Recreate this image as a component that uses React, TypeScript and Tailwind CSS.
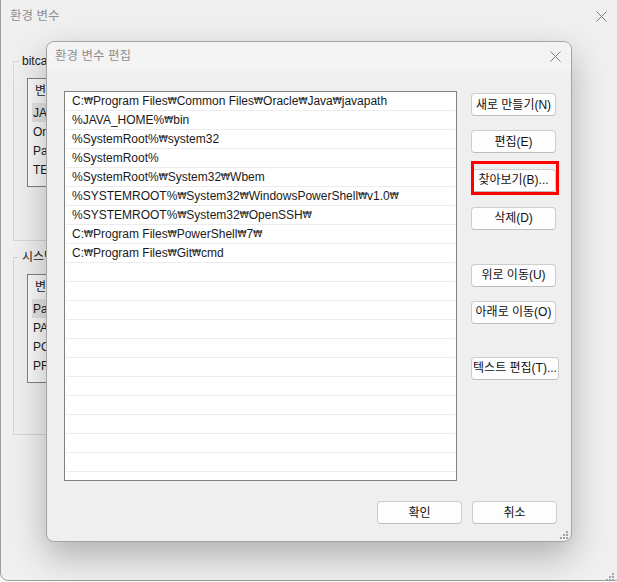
import React from "react";

const FONT = "font-['Liberation_Sans','Noto_Sans_CJK_KR',sans-serif]";

const paths = [
  "C:₩Program Files₩Common Files₩Oracle₩Java₩javapath",
  "%JAVA_HOME%₩bin",
  "%SystemRoot%₩system32",
  "%SystemRoot%",
  "%SystemRoot%₩System32₩Wbem",
  "%SYSTEMROOT%₩System32₩WindowsPowerShell₩v1.0₩",
  "%SYSTEMROOT%₩System32₩OpenSSH₩",
  "C:₩Program Files₩PowerShell₩7₩",
  "C:₩Program Files₩Git₩cmd",
];

// 한국어 윈도우에서 백슬래시는 좁은 ₩ 모양으로 보인다
const PathText = ({ text }: { text: string }) => {
  const parts = text.split("₩");
  return (
    <>
      {parts.map((p, i) => (
        <React.Fragment key={i}>
          {p}
          {i < parts.length - 1 && (
            <span className="inline-flex w-[9px] justify-center font-['DejaVu_Sans'] text-[9.5px]">₩</span>
          )}
        </React.Fragment>
      ))}
    </>
  );
};

const CloseIcon = () => (
  <svg width="11" height="11" viewBox="0 0 11 11" className="shrink-0">
    <path d="M0.5 0.5 L10.5 10.5 M10.5 0.5 L0.5 10.5" stroke="#7c7c7c" strokeWidth="1" />
  </svg>
);

const Grip = () => (
  <svg width="8" height="8" viewBox="0 0 8 8">
    <rect x="6" y="0" width="2" height="2" fill="#a3a3a3" />
    <rect x="3" y="3" width="2" height="2" fill="#a3a3a3" />
    <rect x="6" y="3" width="2" height="2" fill="#a3a3a3" />
    <rect x="0" y="6" width="2" height="2" fill="#a3a3a3" />
    <rect x="3" y="6" width="2" height="2" fill="#a3a3a3" />
    <rect x="6" y="6" width="2" height="2" fill="#a3a3a3" />
  </svg>
);

interface WinButtonProps {
  label: string;
  className?: string;
}

const WinButton: React.FC<WinButtonProps> = ({ label, className = "" }) => (
  <button
    type="button"
    className={`h-[23px] w-[85px] whitespace-nowrap rounded-[4px] border border-[#cdcdcd] border-b-[#bdbdbd] bg-[#fdfdfd] text-[12px] leading-none text-[#111] ${className}`}
  >
    {label}
  </button>
);

interface GroupProps {
  title: string;
  rows: string[];
  className?: string;
}

// 뒤쪽 "환경 변수" 창의 그룹 박스
const Group: React.FC<GroupProps> = ({ title, rows, className = "" }) => (
  <div className={`relative w-[540px] border border-[#d6d6d6] ${className}`}>
    <span className="absolute left-[5px] top-[-9px] whitespace-nowrap bg-[#f0f0f0] px-[3px] text-[12px] leading-[16px] text-[#1a1a1a]">
      {title}
    </span>
    <div className="ml-[13px] mt-[16px] h-[109px] w-[500px] overflow-hidden border border-[#808080] bg-[#fbfbfb] text-[12px] text-[#1a1a1a]">
      <div className="flex h-[24px] items-center pl-[7px]">변수</div>
      {rows.map((r, i) => (
        <div
          key={r}
          className={`mx-[4px] flex h-[19px] items-center whitespace-nowrap pl-[1px] ${i === 0 ? "bg-[#e5e5e5]" : ""}`}
        >
          {r}
        </div>
      ))}
    </div>
  </div>
);

export default function App() {
  const emptyRows = Array.from({ length: 13 });

  return (
    <div className={`relative h-[582px] w-[617px] overflow-hidden bg-[#fafafa] ${FONT}`}>
      {/* 뒤쪽 창 */}
      <div className="absolute left-0 top-[-10px] flex h-[591px] w-[640px] flex-col rounded-lg border border-[#9e9e9e] bg-[#f0f0f0]">
        <div className="mt-[10px] flex h-[30px] items-center justify-between pl-[9px] pr-[32px]">
          <span className="text-[12.5px] text-[#8f8f8f]">환경 변수</span>
          <CloseIcon />
        </div>
        <div className="flex flex-col pl-[12px]">
          <Group
            title="bitcamp에 대한 사용자 변수(U)"
            rows={["JAVA_HOME", "OneDrive", "Path", "TEMP"]}
            className="mt-[30px] h-[180px]"
          />
          <Group
            title="시스템 변수(S)"
            rows={["Path", "PATHEXT", "POWERSHELL_DISTRIBUTION_CHANNEL", "PROCESSOR_ARCHITECTURE"]}
            className="mt-[16px] h-[178px]"
          />
        </div>
      </div>
      <div className="absolute left-[606px] top-[573px]">
        <Grip />
      </div>

      {/* 환경 변수 편집 대화 상자 */}
      <div className="absolute left-[46px] top-[41px] flex h-[501px] w-[526px] flex-col rounded-lg border border-[#a4a4a4] bg-[#efefef] shadow-[0_14px_36px_rgba(0,0,0,0.28)]">
        <div className="flex h-[29px] items-center justify-between rounded-t-lg bg-[#f3f3f3] pl-[8px] pr-[10px]">
          <span className="text-[12.5px] text-[#8f8f8f]">환경 변수 편집</span>
          <CloseIcon />
        </div>

        <div className="flex gap-[14px] pl-[17px] pt-[20px]">
          <div className="h-[390px] w-[393px] overflow-hidden border border-[#828282] bg-white px-[1px] text-[12px] text-[#1a1a1a]">
            {paths.map((p) => (
              <div key={p} className="flex h-[19px] items-center whitespace-nowrap border-b border-[#ececec] pl-[6px]">
                <PathText text={p} />
              </div>
            ))}
            {emptyRows.map((_, i) => (
              <div key={i} className="h-[19px] border-b border-[#ececec]" />
            ))}
          </div>

          <div className="flex flex-col">
            <WinButton label="새로 만들기(N)" className="mt-[2px]" />
            <WinButton label="편집(E)" className="mt-[14px]" />
            <div className="relative mt-[14px]">
              <WinButton label="찾아보기(B)..." />
              <div className="absolute left-0 top-[-6px] h-[34px] w-[88px] border-[3px] border-[#ff0000]" />
            </div>
            <WinButton label="삭제(D)" className="mt-[15px]" />
            <WinButton label="위로 이동(U)" className="mt-[34px]" />
            <WinButton label="아래로 이동(O)" className="mt-[14px]" />
            <WinButton label="텍스트 편집(T)..." className="mt-[33px] w-[88px]" />
          </div>
        </div>

        <div className="mt-[20px] flex justify-end gap-[10px] pr-[14px]">
          <WinButton label="확인" />
          <WinButton label="취소" />
        </div>

        <div className="absolute bottom-[2px] right-[3px]">
          <Grip />
        </div>
      </div>
    </div>
  );
}
